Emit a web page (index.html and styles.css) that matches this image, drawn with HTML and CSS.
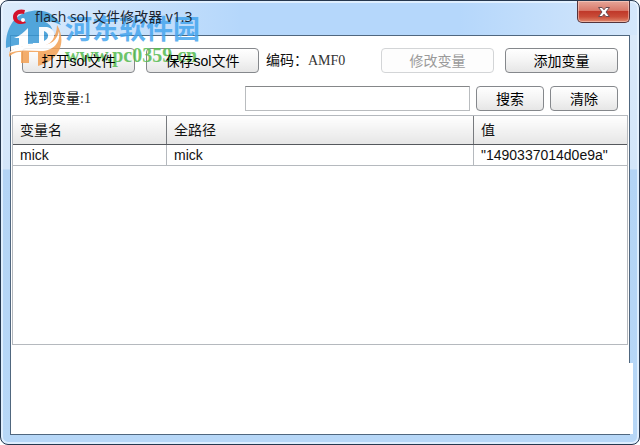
FILE: index.html
```
<!DOCTYPE html>
<html lang="zh-CN">
<head>
<meta charset="utf-8">
<title>flash sol 文件修改器 v1.3</title>
<link rel="stylesheet" href="styles.css">
</head>
<body>
<div class="window">
  <header class="titlebar">
    <svg class="app-icon" viewBox="0 0 16 16" aria-hidden="true"><path d="M13 1C6-1 1 3 1 8s5 9 13 6l-2-3c-4 2-7 0-7-3s3-4 7-3z" fill="#d3122c"/><circle cx="11" cy="11" r="2" fill="#fff"/></svg>
    <h1 class="title">flash sol 文件修改器 v1.3</h1>
    <button class="close" type="button" aria-label="关闭">
      <svg viewBox="0 0 14 12" aria-hidden="true"><path d="M1.5 1.5h3.7L7 3.8l1.8-2.3h3.7L9 6l3.5 4.5H8.8L7 8.2l-1.8 2.3H1.5L5 6z" fill="#fff" stroke="#6b4b50" stroke-width="1"/></svg>
    </button>
  </header>
  <main class="client">
    <div class="bar">
      <button class="btn wide" type="button"><span class="label">打开sol文件</span></button>
      <button class="btn wide" type="button"><span class="label">保存sol文件</span></button>
      <p class="encoding">编码：<span class="serif">AMF0</span></p>
      <button class="btn wide push" type="button" disabled>修改变量</button>
      <button class="btn wide" type="button">添加变量</button>
    </div>
    <div class="bar search">
      <label class="found" for="query">找到变量<span class="serif">:1</span></label>
      <input class="query push" id="query" type="text">
      <button class="btn" type="button">搜索</button>
      <button class="btn" type="button">清除</button>
    </div>
    <div class="grid">
      <table>
        <colgroup><col class="col-name"><col class="col-path"><col class="col-value"></colgroup>
        <thead><tr><th>变量名</th><th>全路径</th><th>值</th></tr></thead>
        <tbody><tr><td>mick</td><td>mick</td><td>"1490337014d0e9a"</td></tr></tbody>
      </table>
    </div>
    <div class="patch"></div>
  </main>
  <div class="watermark">
    <svg class="mark" viewBox="0 0 58 58" aria-hidden="true">
      <path d="M1 38C0 18 10 3 27 1c14-2 24 4 29 14-8-4-12-4-16-3 10 4 9 14 3 21-15 1-31 0-42 5z" fill="#3a9ad6"/>
      <path d="M4 42c9-6 20-7 30-7 11-1 18-8 18-20 9 14 5 35-19 41v-14h-9v11h-8V42c-6 0-9 2-12 5z" fill="#f3a053"/>
      <path d="M23 18v18h-9v-8H9c6-2 10-6 14-10zM34 17h8c10 2 9 13 1 17-3 2-7 2-11 2h-4v-3h6zM39 21v10c5-2 6-8 0-10z" fill="#fff" fill-rule="evenodd"/>
      <path d="M3 44c9-10 22-9 34-9 9 0 15-5 17-14 2 12-6 20-18 20-13 0-24-2-33 3z" fill="#fff"/>
    </svg>
    <div class="mark-text">
      <span class="mark-name">河东软件园</span>
      <span class="mark-url">www.pc0359.cn</span>
    </div>
  </div>
</div>
</body>
</html>
```
FILE: styles.css
```
* { box-sizing: border-box; }

body {
  margin: 0;
  background: #fff;
  color: #111;
  font: 14px/20px "Liberation Sans", "Noto Sans CJK SC", sans-serif;
}

h1, p { margin: 0; }

.window {
  position: relative;
  display: flex;
  flex-direction: column;
  min-height: 100vh;
  padding: 0 9px 9px;
  border: 1px solid #26384f;
  border-radius: 8px;
  background:
    linear-gradient(90deg, #dcecfc 0, rgba(220, 236, 252, 0) 240px) 0 0 / 100% 34px no-repeat,
    linear-gradient(270deg, #d5e7fb 0, rgba(213, 231, 251, 0) 180px) 0 0 / 100% 34px no-repeat,
    linear-gradient(#b5d7fb, #b5d7fb) 0 0 / 100% 34px no-repeat,
    linear-gradient(#dceafa 0, #d3e6fa 168px, #b3d4f5 169px, #b7d7f7 100%);
  box-shadow: inset 0 0 0 2px rgba(232, 244, 255, 0.8);
}

.titlebar {
  display: flex;
  align-items: flex-start;
  height: 34px;
}

.app-icon {
  position: relative;
  z-index: 1;
  width: 16px;
  height: 16px;
  margin: 8px 0 0 2px;
}

.title {
  position: relative;
  z-index: 1;
  margin: 6px 0 0 7px;
  color: #1b2530;
  font: 14px/20px "Open Sans", "Noto Sans CJK SC", sans-serif;
}

.close {
  display: flex;
  align-items: center;
  justify-content: center;
  width: 53px;
  height: 22px;
  margin-left: auto;
  padding: 0;
  border: 1px solid #54343c;
  border-top: 0;
  border-radius: 0 0 5px 5px;
  background: linear-gradient(#e6a699 0, #d9796a 45%, #c0392a 50%, #c94c38 75%, #e08a70 100%);
  box-shadow: inset 0 0 0 1px rgba(255, 220, 210, 0.5);
}

.close svg { width: 14px; height: 12px; }

.client {
  position: relative;
  display: flex;
  flex: 1;
  flex-direction: column;
  padding: 12px 0 0;
  border: 1px solid #50677f;
  background: #fff;
}

.bar {
  display: flex;
  align-items: center;
  gap: 11px;
  padding: 0 11px;
}

.bar.search {
  gap: 6px;
  margin: 13px 0 4px;
}

.btn {
  width: 68px;
  height: 25px;
  padding: 0;
  border: 1px solid #85888c;
  border-radius: 4px;
  background: linear-gradient(#fff, #f4f4f4 50%, #e6e6e6);
  color: #000;
  font: inherit;
  white-space: nowrap;
}

.btn.wide { width: 113px; }

.btn:disabled {
  border-color: #d3d5d7;
  background: #fdfdfd;
  color: #9a9a9a;
}

.label { position: relative; z-index: 1; }

.push { margin-left: auto; }

.encoding { margin-left: -4px; white-space: nowrap; }

.serif { font-family: "Liberation Serif", serif; color: #333; }

.found { padding-left: 2px; }

.query {
  flex: 0 1 225px;
  min-width: 0;
  height: 25px;
  padding: 0 4px;
  border: 1px solid #b9bcbf;
  border-top-color: #858789;
  background: #fff;
  font: inherit;
}

.grid {
  height: 230px;
  margin: 0 1px;
  border: 1px solid #b5b9be;
}

table {
  width: 100%;
  border-collapse: collapse;
  table-layout: fixed;
}

.col-name { width: 25%; }
.col-path { width: 50%; }
.col-value { width: 25%; }

th, td {
  padding: 0 7px;
  border-right: 1px solid #b5b9be;
  font-weight: normal;
  text-align: left;
  white-space: nowrap;
}

th {
  height: 28px;
  border-right-color: #777a7e;
  border-bottom: 1px solid #55585d;
  background: linear-gradient(#fff, #e6e6e6);
}

td {
  height: 21px;
  border-bottom: 1px solid #b5b9be;
}

th:last-child, td:last-child { border-right: 0; }

/* Blank area that runs over the lower right frame */
.patch {
  position: absolute;
  right: -4px;
  bottom: 0;
  width: 8px;
  height: 71px;
  background: #fff;
}

/* Sits over the frame and buttons, under the title and the labels */
.watermark {
  position: absolute;
  top: 9px;
  left: 4px;
  display: flex;
  gap: 2px;
  opacity: 0.85;
  pointer-events: none;
}

.mark { width: 58px; height: 58px; }

.mark-text {
  display: flex;
  flex-direction: column;
  padding-top: 2px;
  white-space: nowrap;
}

.mark-name {
  color: #45a5ee;
  font: bold 27px/32px "Noto Sans CJK SC", sans-serif;
}

.mark-url {
  color: #55bb50;
  font: bold 20px/22px "Liberation Serif", serif;
}
```
